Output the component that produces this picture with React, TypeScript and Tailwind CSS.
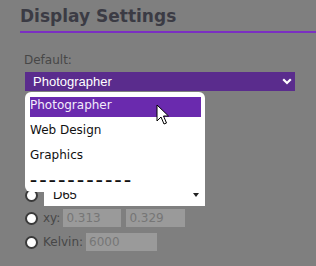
import React from 'react';

const sans = { fontFamily: '"DejaVu Sans", Verdana, sans-serif' };
const arial = { fontFamily: '"Liberation Sans", Arial, sans-serif' };

const options = ['Photographer', 'Web Design', 'Graphics'];

const Radio: React.FC = () => (
  <span className="block w-[13px] h-[13px] shrink-0 rounded-full bg-white border-2 border-[#3a3a3a]" />
);

const Field: React.FC<{ value: string; width: string }> = ({ value, width }) => (
  <div className={`${width} h-[18px] bg-[#9a9a9a] pl-[3px] text-[12px] leading-[18px] text-[#767676]`}>{value}</div>
);

const Cursor: React.FC = () => (
  <svg className="absolute left-[156px] top-[104px]" width="14" height="22" viewBox="0 0 14 22">
    <path d="M1 1 L1 17 L5 13 L8 20 L10.5 19 L7.5 12 L12.5 12 Z" fill="#fff" stroke="#000" strokeWidth="1" strokeLinejoin="round" />
  </svg>
);

export default function App() {
  return (
    <div className="relative w-[316px] h-[266px] overflow-hidden bg-[#7f7f7f]" style={sans}>
      <div className="ml-[20px] pt-[6px]">
        <h2 className="text-[17px] leading-[20px] font-bold text-[#3b3b44]">Display Settings</h2>
        <div className="mt-[5px] h-[2px] bg-[#7b2fc2]" />
      </div>

      <div className="pl-[24px] mt-[20px] text-[12px] leading-[14px] text-[#474747]">Default:</div>

      <div className="ml-[25px] mt-[5px] w-[270px] h-[19px] bg-[#5a2c8d] flex items-center justify-between pl-[8px] pr-[3px]">
        <span className="text-[13px] leading-[19px] text-white" style={arial}>Photographer</span>
        <svg width="10" height="7" viewBox="0 0 10 7">
          <path d="M1.2 1.2 L5 5 L8.8 1.2" fill="none" stroke="#fff" strokeWidth="2.2" />
        </svg>
      </div>

      <div className="mt-[93px] flex items-center h-[22px] pl-[25px]">
        <Radio />
        <div className="ml-[6px] w-[161px] h-[22px] bg-white flex items-center justify-between pl-[9px] pr-[6px]">
          <span className="text-[13px] leading-[22px] text-[#111]" style={arial}>D65</span>
          <svg width="6" height="4" viewBox="0 0 6 4">
            <path d="M0 0 L6 0 L3 4 Z" fill="#222" />
          </svg>
        </div>
      </div>

      <div className="mt-[3px] flex items-center h-[18px] pl-[25px] text-[12px] text-[#474747]">
        <Radio />
        <span className="ml-[5px] leading-[18px]">xy:</span>
        <div className="ml-[3px] flex gap-[5px]">
          <Field value="0.313" width="w-[58px]" />
          <Field value="0.329" width="w-[59px]" />
        </div>
      </div>

      <div className="mt-[6px] flex items-center h-[18px] pl-[25px] text-[12px] text-[#474747]">
        <Radio />
        <span className="ml-[5px] leading-[18px]">Kelvin:</span>
        <div className="ml-[3px]">
          <Field value="6000" width="w-[71px]" />
        </div>
      </div>

      <div className="absolute left-[25px] top-[92px] w-[180px] h-[100px] bg-white rounded-[6px] pt-[5px] pl-[5px] pr-[4px]">
        {options.map((o, i) => (
          <div
            key={o}
            className={`h-[20px] mb-[5px] text-[12px] leading-[16px] ${i === 0 ? 'bg-[#6a2aae] text-[#f3ecfb]' : 'text-[#111]'}`}
          >
            {o}
          </div>
        ))}
        <div className="h-[20px] text-[14px] font-bold leading-[16px] tracking-[2.4px] text-[#111]">–––––––––––</div>
      </div>

      <Cursor />
    </div>
  );
}
